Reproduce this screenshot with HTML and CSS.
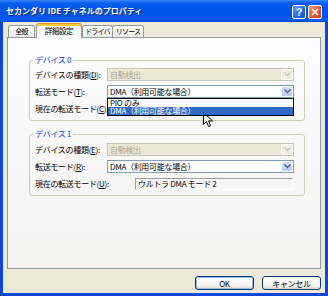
FILE: index.html
```
<!DOCTYPE html>
<html>
<head>
<meta charset="utf-8">
<title>セカンダリ IDE チャネルのプロパティ</title>
<link rel="stylesheet" href="styles.css">
</head>
<body>
<div class="window">
    <div class="titlebar">
        <span class="title">セカンダリ IDE チャネルのプロパティ</span>
        <div class="caption">
            <span class="cap help">?</span>
            <span class="cap close">
                <svg width="8" height="8" viewBox="0 0 8 8"><path d="M1 1L7 7M7 1L1 7" stroke="#fff" stroke-width="1.6"/></svg>
            </span>
        </div>
    </div>
    <div class="client">
        <div class="tabs">
            <span class="tab t1">全般</span>
            <span class="tab t2 active">詳細設定</span>
            <span class="tab t3">ドライバ</span>
            <span class="tab t4">リソース</span>
        </div>
        <div class="panel">
            <fieldset class="group">
                <legend>デバイス 0</legend>
                <div class="row">
                    <span class="label">デバイスの種類(<u>D</u>):</span>
                    <div class="combo disabled">
                        <span class="value">自動検出</span>
                        <span class="drop"><svg width="7" height="5" viewBox="0 0 7 5"><path d="M0.5 0.5L3.5 3.5L6.5 0.5" fill="none" stroke="#c9c7ba" stroke-width="1.4"/></svg></span>
                    </div>
                </div>
                <div class="row">
                    <span class="label">転送モード(<u>T</u>):</span>
                    <div class="combo open">
                        <span class="value">DMA（利用可能な場合）</span>
                        <span class="drop"><svg width="7" height="5" viewBox="0 0 7 5"><path d="M0.5 0.5L3.5 3.5L6.5 0.5" fill="none" stroke="#4d6185" stroke-width="1.4"/></svg></span>
                        <div class="list">
                            <div class="item">PIO のみ</div>
                            <div class="item selected">DMA（利用可能な場合）</div>
                        </div>
                    </div>
                </div>
                <div class="row">
                    <span class="label wide">現在の転送モード(<u>C</u>):</span>
                    <div class="field"></div>
                </div>
            </fieldset>
            <fieldset class="group second">
                <legend>デバイス 1</legend>
                <div class="row">
                    <span class="label">デバイスの種類(<u>E</u>):</span>
                    <div class="combo disabled">
                        <span class="value">自動検出</span>
                        <span class="drop"><svg width="7" height="5" viewBox="0 0 7 5"><path d="M0.5 0.5L3.5 3.5L6.5 0.5" fill="none" stroke="#c9c7ba" stroke-width="1.4"/></svg></span>
                    </div>
                </div>
                <div class="row">
                    <span class="label">転送モード(<u>R</u>):</span>
                    <div class="combo">
                        <span class="value">DMA（利用可能な場合）</span>
                        <span class="drop"><svg width="7" height="5" viewBox="0 0 7 5"><path d="M0.5 0.5L3.5 3.5L6.5 0.5" fill="none" stroke="#4d6185" stroke-width="1.4"/></svg></span>
                    </div>
                </div>
                <div class="row">
                    <span class="label wide">現在の転送モード(<u>U</u>):</span>
                    <div class="field">ウルトラ DMA モード 2</div>
                </div>
            </fieldset>
        </div>
        <div class="footer">
            <button class="btn default">OK</button>
            <button class="btn">キャンセル</button>
        </div>
    </div>
</div>
<svg class="cursor" width="11" height="17" viewBox="0 0 11 17">
    <path d="M0.5 0.5L0.5 12.5L3.5 9.7L5.6 14.5L7.6 13.6L5.5 8.9L9.5 8.9Z" fill="#fff" stroke="#000" stroke-width="1" stroke-linejoin="round"/>
</svg>
</body>
</html>
```
FILE: styles.css
```
body {
    margin: 0;
    padding: 0;
    font-family: "Noto Sans CJK JP", sans-serif;
    font-size: 8px;
    letter-spacing: -0.3px;
    color: #000;
}
.window {
    width: 328px;
    height: 296px;
    display: flex;
    flex-direction: column;
    position: relative;
}
.titlebar {
    height: 22px;
    flex: none;
    display: flex;
    align-items: center;
    justify-content: space-between;
    padding: 0 6px;
    box-sizing: border-box;
    background: linear-gradient(#3a86f5 0, #0a5ff0 3px, #0055ea 9px, #0054e6 16px, #0a5ced 20px, #0048da 22px);
}
.title {
    color: #fff;
    font-weight: bold;
    font-size: 8px;
    letter-spacing: 0;
    line-height: 12px;
    text-shadow: 1px 1px 0 #0a2a8a;
}
.caption {
    display: flex;
    gap: 2px;
    margin-top: 1px;
}
.cap {
    width: 14px;
    height: 14px;
    box-sizing: border-box;
    border: 1px solid #fff;
    border-radius: 2px;
    display: flex;
    align-items: center;
    justify-content: center;
    color: #fff;
    font-family: "Liberation Sans", sans-serif;
    font-weight: bold;
    font-size: 11px;
    letter-spacing: 0;
}
.help {
    background: linear-gradient(135deg, #6a9cf9, #2563e8 60%, #1a4fd6);
}
.close {
    background: linear-gradient(135deg, #f19a7a, #e25a30 55%, #c8421c);
}
.client {
    flex: 1;
    background: #ece9d8;
    border: 3px solid #0a47da;
    border-top: none;
    padding: 1px 4px 0 4px;
    display: flex;
    flex-direction: column;
}
.tabs {
    display: flex;
    align-items: flex-end;
    height: 14px;
    padding-left: 1px;
}
.tab {
    height: 12px;
    flex: none;
    box-sizing: border-box;
    border: 1px solid #919b9c;
    border-bottom: none;
    border-radius: 3px 3px 0 0;
    background: linear-gradient(#ffffff, #ecebe6);
    text-align: center;
    line-height: 11px;
    font-size: 7px;
    letter-spacing: -0.8px;
    white-space: nowrap;
}
.t1 { width: 27px; margin-right: 1px; }
.t2 { width: 46px; }
.t3 { width: 31px; }
.t4 { width: 32px; margin-left: -1px; }
.tab.active {
    height: 15px;
    margin-bottom: -1px;
    position: relative;
    z-index: 1;
    background: #fcfcfe;
    border-top: 1px solid #e68b2c;
    box-shadow: inset 0 2px 0 #ffc83c;
    line-height: 14px;
    font-size: 7.5px;
    letter-spacing: -0.4px;
}
.panel {
    height: 232px;
    box-sizing: border-box;
    border: 1px solid #919b9c;
    background: linear-gradient(#fcfcfe, #f4f3ee);
    padding-left: 21px;
}
.group {
    width: 276px;
    box-sizing: border-box;
    margin: 17px 0 0 0;
    padding: 3px 10px 5px 5px;
    border: 1px solid #d0d0bf;
    border-radius: 3px;
    min-width: 0;
    display: flex;
    flex-direction: column;
    gap: 4px;
}
.group.second {
    margin-top: 8px;
    padding-top: 4px;
}
legend {
    color: #0046d5;
    padding: 0 2px;
    margin-left: -2px;
    line-height: 10px;
    font-size: 8px;
}
.row {
    display: flex;
    align-items: center;
    height: 13px;
}
.label {
    width: 72px;
    flex: none;
    white-space: nowrap;
    line-height: 10px;
}
.label.wide {
    width: 100px;
}
.combo {
    width: 187px;
    height: 13px;
    box-sizing: border-box;
    border: 1px solid #7f9db9;
    background: #fff;
    display: flex;
    align-items: center;
    position: relative;
}
.combo .value {
    flex: 1;
    padding-left: 2px;
    line-height: 11px;
    white-space: nowrap;
}
.drop {
    width: 12px;
    height: 11px;
    box-sizing: border-box;
    border: 1px solid #fff;
    border-radius: 2px;
    background: linear-gradient(#d4e2fd, #b5cbf7);
    display: flex;
    align-items: center;
    justify-content: center;
}
.combo.disabled {
    background: #ebe8d7;
    border-color: #c9c7ba;
    color: #aca899;
}
.combo.disabled .drop {
    background: #f1efe2;
}
.list {
    position: absolute;
    top: 12px;
    left: -1px;
    right: -1px;
    border: 1px solid #000;
    background: #fff;
    z-index: 2;
}
.item {
    height: 8px;
    line-height: 8px;
    padding-left: 2px;
    white-space: nowrap;
}
.item.selected {
    background: #316ac5;
    color: #fff;
}
.field {
    width: 158px;
    height: 12px;
    box-sizing: border-box;
    border-top: 1px solid #a0a0a0;
    border-left: 1px solid #a0a0a0;
    border-right: 1px solid #fff;
    border-bottom: 1px solid #fff;
    padding-left: 2px;
    line-height: 10px;
    white-space: nowrap;
}
.footer {
    display: flex;
    justify-content: flex-end;
    gap: 8px;
    padding-top: 7px;
}
.btn {
    width: 59px;
    height: 14px;
    box-sizing: border-box;
    border: 1px solid #003c74;
    border-radius: 3px;
    background: linear-gradient(#ffffff, #f3f3ee 75%, #d6d0c5);
    font-family: "Noto Sans CJK JP", sans-serif;
    font-size: 8px;
    letter-spacing: -0.3px;
    line-height: 11px;
    padding: 0;
    color: #000;
}
.btn.default {
    box-shadow: inset 0 0 0 1px #98b8ea;
}
.cursor {
    position: absolute;
    left: 203px;
    top: 112px;
}
```
